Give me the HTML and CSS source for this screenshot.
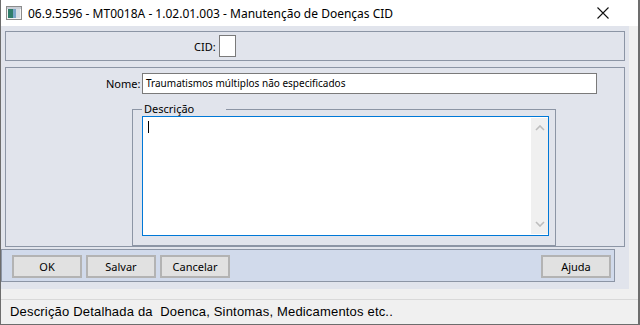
FILE: index.html
```html
<!DOCTYPE html>
<html lang="pt">
<head>
  <meta charset="UTF-8" />
  <title>Manutenção de Doenças CID</title>
  <link rel="stylesheet" href="styles.css">
</head>
<body>
  <div class="window">
    <div class="titlebar">
      <svg class="app-icon" width="16" height="14" viewBox="0 0 16 14">
        <rect x="0.5" y="0.5" width="15" height="13" fill="#f4f4f4" stroke="#8c8c8c"/>
        <rect x="2" y="3" width="5" height="9" fill="#2f7d6a"/>
        <rect x="7" y="3" width="3" height="9" fill="#7aa6c8"/>
        <rect x="10" y="3" width="4" height="9" fill="#d8dde4"/>
        <rect x="1" y="1" width="14" height="2" fill="#c9ced6"/>
      </svg>
      <span class="title">06.9.5596 - MT0018A - 1.02.01.003 - Manutenção de Doenças CID</span>
      <svg class="close" width="12" height="12" viewBox="0 0 12 12">
        <path d="M0.5 0.5 L11.5 11.5 M11.5 0.5 L0.5 11.5" stroke="#111" stroke-width="1.1"/>
      </svg>
    </div>

    <div class="client">
      <div class="form">
        <div class="panel panel-cid">
          <label class="lbl">CID:</label>
          <div class="field cid-field"></div>
        </div>

        <div class="panel panel-main">
          <div class="row-nome">
            <label class="lbl">Nome:</label>
            <div class="field nome-field">Traumatismos múltiplos não especificados</div>
          </div>
          <fieldset class="group">
            <legend>Descrição</legend>
            <div class="memo">
              <div class="memo-text"><span class="caret"></span></div>
              <div class="vscroll">
                <svg width="10" height="6" viewBox="0 0 10 6"><path d="M1 5 L5 1 L9 5" fill="none" stroke="#bdbdbd" stroke-width="1.6"/></svg>
                <svg width="10" height="6" viewBox="0 0 10 6"><path d="M1 1 L5 5 L9 1" fill="none" stroke="#bdbdbd" stroke-width="1.6"/></svg>
              </div>
            </div>
          </fieldset>
        </div>

        <div class="buttonbar">
          <button class="btn">OK</button>
          <button class="btn">Salvar</button>
          <button class="btn">Cancelar</button>
          <span class="spacer"></span>
          <button class="btn">Ajuda</button>
        </div>
      </div>
      <div class="side"></div>
    </div>

    <div class="statusbar">
      <div class="status-gap"></div>
      <div class="status-text">Descrição Detalhada da&nbsp; Doenca, Sintomas, Medicamentos etc..</div>
    </div>
  </div>
</body>
</html>
```

FILE: styles.css
```css
html, body {
  margin: 0;
  padding: 0;
  background: #f0f0f0;
}

.window {
  width: 640px;
  height: 325px;
  box-sizing: border-box;
  border-left: 1px solid #6d6d6d;
  border-right: 2px solid #6d6d6d;
  border-bottom: 1px solid #6d6d6d;
  display: flex;
  flex-direction: column;
  background: #f0f0f0;
  font-family: "Noto Sans", "Open Sans", sans-serif;
  overflow: hidden;
}

.titlebar {
  height: 26px;
  flex: none;
  background: #fff;
  display: flex;
  align-items: center;
  padding-left: 5px;
  padding-right: 29px;
}

.app-icon {
  flex: none;
}

.title {
  margin-left: 6px;
  font-size: 12px;
  color: #000;
  flex: 1;
  white-space: nowrap;
}

.close {
  flex: none;
}

.client {
  height: 263px;
  flex: none;
  display: flex;
}

.form {
  width: 628px;
  background: #e1e4ec;
  padding-top: 5px;
  box-sizing: border-box;
  display: flex;
  flex-direction: column;
}

.side {
  flex: 1;
  background: #f0f0f0;
}

.panel {
  border: 1px solid #8c95a5;
  margin-left: 4px;
  width: 620px;
  box-sizing: border-box;
}

.lbl {
  font-size: 11px;
  color: #000;
}

.field {
  background: #fff;
  border: 1px solid #7a7a7a;
  box-sizing: border-box;
}

.panel-cid {
  height: 30px;
  display: flex;
  align-items: center;
  padding-left: 188px;
}

.cid-field {
  width: 17px;
  height: 22px;
  margin-left: 3px;
}

.panel-main {
  margin-top: 6px;
  height: 180px;
  padding: 5px 0 0 126px;
}

.row-nome {
  display: flex;
  align-items: center;
  margin-left: -26px;
}

.row-nome .lbl {
  width: 34px;
  text-align: right;
  margin-right: 2px;
}

.nome-field {
  width: 455px;
  height: 21px;
  font-size: 10px;
  padding-left: 3px;
  line-height: 19px;
  white-space: nowrap;
}

.group {
  margin: 9px 0 0 0;
  width: 424px;
  height: 143px;
  box-sizing: border-box;
  border: 1px solid #8c95a5;
  padding: 0 6px 0 9px;
}

.group legend {
  font-size: 11px;
  padding: 0 2px;
  margin-left: 0;
  line-height: 12px;
  width: 80px;
}

.memo {
  margin-top: 1px;
  width: 407px;
  height: 120px;
  box-sizing: border-box;
  border: 1px solid #0078d7;
  background: #fff;
  display: flex;
}

.memo-text {
  flex: 1;
  padding: 4px 0 0 5px;
}

.caret {
  display: block;
  width: 1px;
  height: 12px;
  background: #000;
}

.vscroll {
  width: 17px;
  background: #f0f0f0;
  margin: 1px 0 1px 0;
  display: flex;
  flex-direction: column;
  justify-content: space-between;
  align-items: center;
  padding: 7px 0 7px;
  box-sizing: border-box;
}

.buttonbar {
  margin-top: 2px;
  width: 614px;
  height: 33px;
  box-sizing: border-box;
  border: 1px solid #8c95a5;
  background: #d1daeb;
  display: flex;
  align-items: center;
  padding: 0 3px 0 10px;
  gap: 4px;
}

.spacer {
  flex: 1;
}

.btn {
  width: 70px;
  height: 23px;
  border: 2px solid #b3b3b3;
  background: #e1e1e1;
  font-family: "Noto Sans", "Open Sans", sans-serif;
  font-size: 11px;
  color: #000;
  padding: 0;
  margin-top: 2px;
}

.statusbar {
  flex: 1;
  display: flex;
  flex-direction: column;
}

.status-gap {
  height: 10px;
  border-bottom: 1px solid #d9d9d9;
}

.status-text {
  font-family: "Liberation Sans", Arial, sans-serif;
  font-size: 13px;
  letter-spacing: 0.18px;
  padding: 4px 0 0 9px;
  color: #000;
  white-space: nowrap;
}
```
